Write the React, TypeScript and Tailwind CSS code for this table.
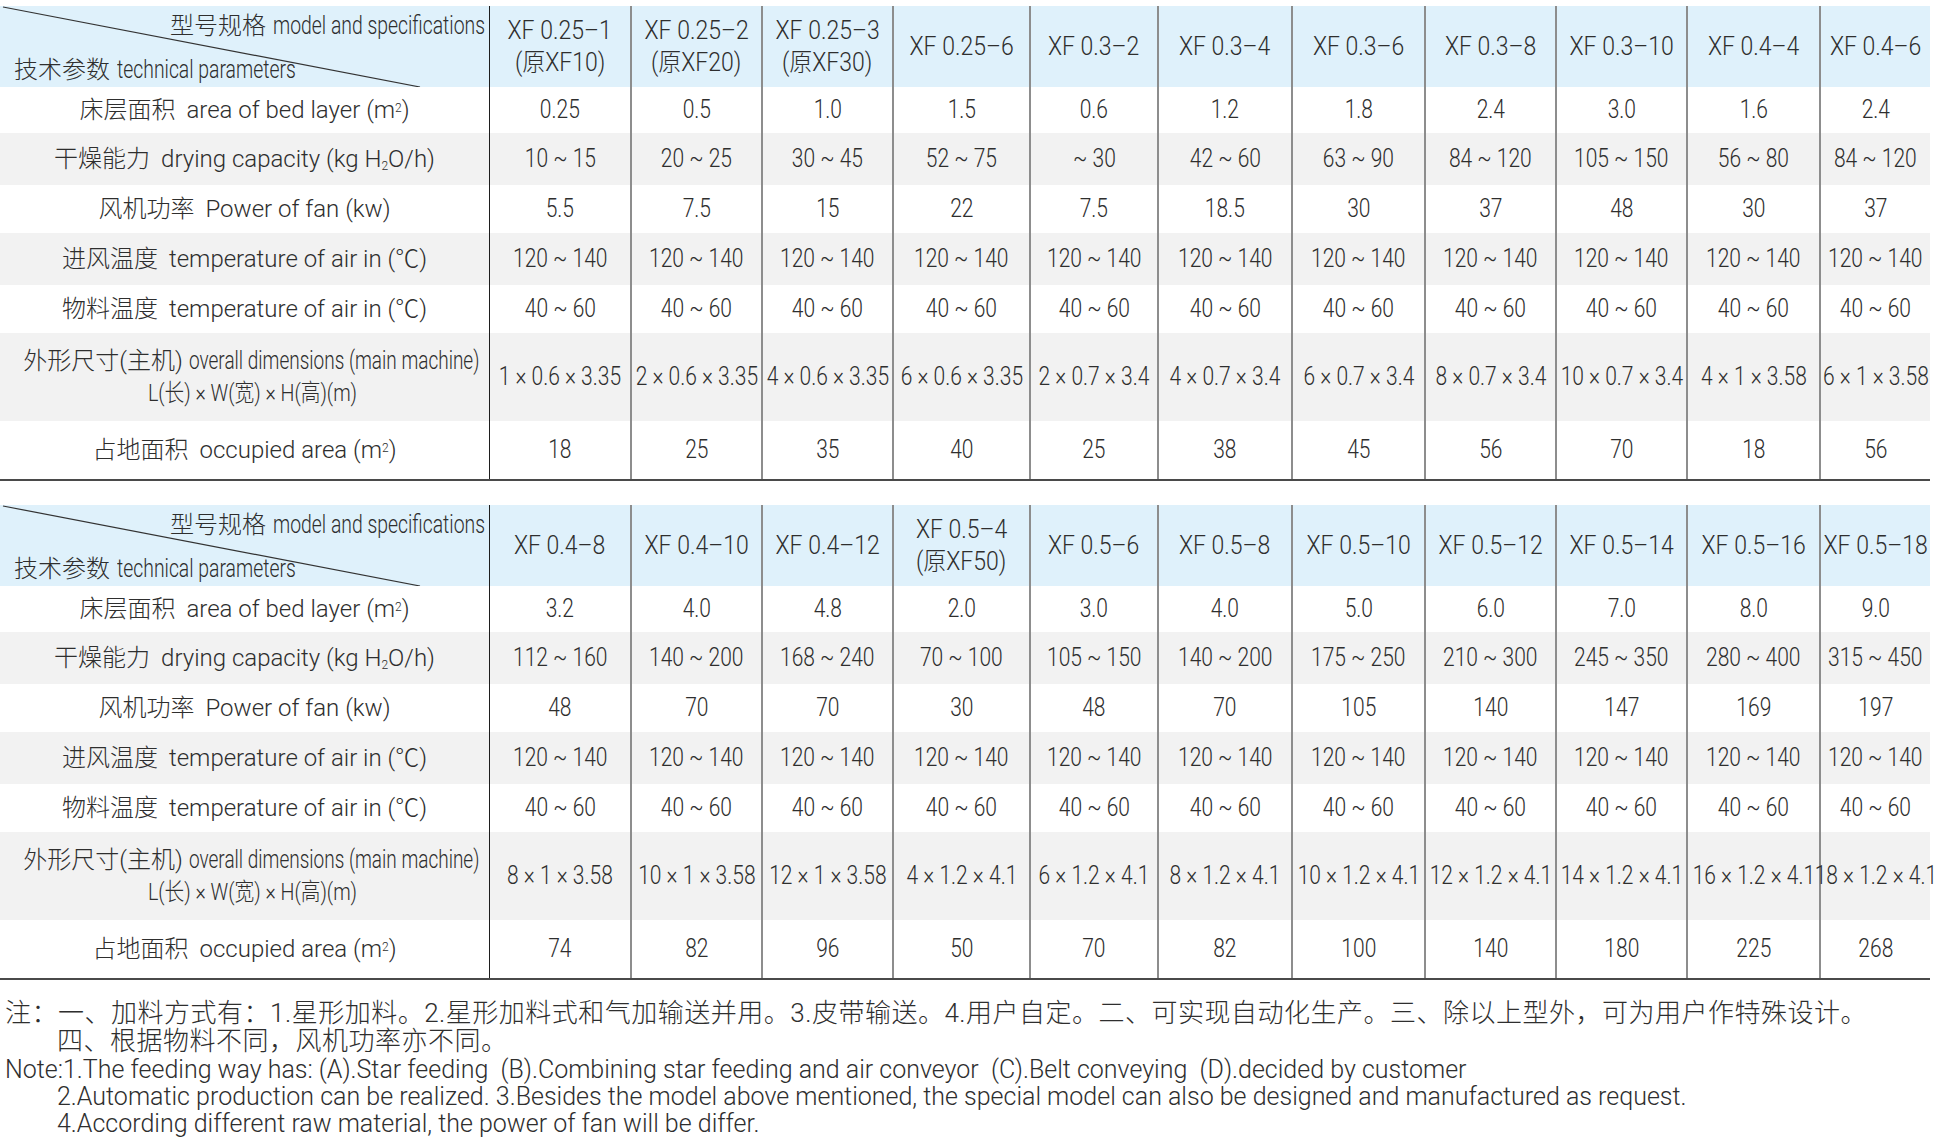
import type { ReactNode } from 'react'

const COLS =
  'grid grid-cols-[489px_141px_131px_131px_137px_128px_134px_133px_131px_131px_133px_111px]'

const ROW_H = ['h-[46px]', 'h-[52px]', 'h-[48px]', 'h-[52px]', 'h-[48px]', 'h-[88px]', 'h-[58px]']
const ROW_BG = ['bg-white', 'bg-[#f2f2f2]', 'bg-white', 'bg-[#f2f2f2]', 'bg-white', 'bg-[#f2f2f2]', 'bg-white']

function Label({ zh, children }: { zh: string; children: ReactNode }) {
  return (
    <div className="flex items-baseline whitespace-nowrap">
      <span className="mr-[11px]">{zh}</span>
      <span>{children}</span>
    </div>
  )
}

const LABELS: ReactNode[] = [
  <Label zh="床层面积">
    area of bed layer (m<sup className="text-[12px]">2</sup>)
  </Label>,
  <Label zh="干燥能力">
    drying capacity (kg H<sub className="text-[12px]">2</sub>O/h)
  </Label>,
  <Label zh="风机功率">Power of fan (kw)</Label>,
  <Label zh="进风温度">temperature of air in (℃)</Label>,
  <Label zh="物料温度">temperature of air in (℃)</Label>,
  <div className="flex flex-col items-center pl-[16px] leading-[32px]">
    <div className="flex items-baseline whitespace-nowrap">
      <span className="mr-[6px]">外形尺寸(主机)</span>
      <span className="inline-block w-[293px] origin-left scale-x-[0.76] text-[25px]">
        overall dimensions (main machine)
      </span>
    </div>
    <span className="inline-block scale-x-[0.82] whitespace-nowrap">L(长) × W(宽) × H(高)(m)</span>
  </div>,
  <Label zh="占地面积">
    occupied area (m<sup className="text-[12px]">2</sup>)
  </Label>,
]

type Spec = {
  models: string[][]
  rows: string[][]
}

const TABLES: Spec[] = [
  {
    models: [
      ['XF 0.25–1', '(原XF10)'],
      ['XF 0.25–2', '(原XF20)'],
      ['XF 0.25–3', '(原XF30)'],
      ['XF 0.25–6'],
      ['XF 0.3–2'],
      ['XF 0.3–4'],
      ['XF 0.3–6'],
      ['XF 0.3–8'],
      ['XF 0.3–10'],
      ['XF 0.4–4'],
      ['XF 0.4–6'],
    ],
    rows: [
      ['0.25', '0.5', '1.0', '1.5', '0.6', '1.2', '1.8', '2.4', '3.0', '1.6', '2.4'],
      ['10 ~ 15', '20 ~ 25', '30 ~ 45', '52 ~ 75', '~ 30', '42 ~ 60', '63 ~ 90', '84 ~ 120', '105 ~ 150', '56 ~ 80', '84 ~ 120'],
      ['5.5', '7.5', '15', '22', '7.5', '18.5', '30', '37', '48', '30', '37'],
      Array(11).fill('120 ~ 140'),
      Array(11).fill('40 ~ 60'),
      [
        '1 × 0.6 × 3.35',
        '2 × 0.6 × 3.35',
        '4 × 0.6 × 3.35',
        '6 × 0.6 × 3.35',
        '2 × 0.7 × 3.4',
        '4 × 0.7 × 3.4',
        '6 × 0.7 × 3.4',
        '8 × 0.7 × 3.4',
        '10 × 0.7 × 3.4',
        '4 × 1 × 3.58',
        '6 × 1 × 3.58',
      ],
      ['18', '25', '35', '40', '25', '38', '45', '56', '70', '18', '56'],
    ],
  },
  {
    models: [
      ['XF 0.4–8'],
      ['XF 0.4–10'],
      ['XF 0.4–12'],
      ['XF 0.5–4', '(原XF50)'],
      ['XF 0.5–6'],
      ['XF 0.5–8'],
      ['XF 0.5–10'],
      ['XF 0.5–12'],
      ['XF 0.5–14'],
      ['XF 0.5–16'],
      ['XF 0.5–18'],
    ],
    rows: [
      ['3.2', '4.0', '4.8', '2.0', '3.0', '4.0', '5.0', '6.0', '7.0', '8.0', '9.0'],
      ['112 ~ 160', '140 ~ 200', '168 ~ 240', '70 ~ 100', '105 ~ 150', '140 ~ 200', '175 ~ 250', '210 ~ 300', '245 ~ 350', '280 ~ 400', '315 ~ 450'],
      ['48', '70', '70', '30', '48', '70', '105', '140', '147', '169', '197'],
      Array(11).fill('120 ~ 140'),
      Array(11).fill('40 ~ 60'),
      [
        '8 × 1 × 3.58',
        '10 × 1 × 3.58',
        '12 × 1 × 3.58',
        '4 × 1.2 × 4.1',
        '6 × 1.2 × 4.1',
        '8 × 1.2 × 4.1',
        '10 × 1.2 × 4.1',
        '12 × 1.2 × 4.1',
        '14 × 1.2 × 4.1',
        '16 × 1.2 × 4.1',
        '18 × 1.2 × 4.1',
      ],
      ['74', '82', '96', '50', '70', '82', '100', '140', '180', '225', '268'],
    ],
  },
]

function cellBorder(i: number) {
  return i === 0 ? 'border-l border-[#1e1e1e]' : 'border-l-2 border-[#8d8d8d]'
}

function DiagonalHeader() {
  return (
    <div className="relative flex h-full flex-col justify-between pb-[2px] pt-[4px] leading-[30px]">
      <svg className="absolute inset-0 h-full w-full" viewBox="0 0 489 81" preserveAspectRatio="none">
        <line x1="3" y1="1" x2="420" y2="81" stroke="#333" strokeWidth="1.2" />
      </svg>
      <div className="flex items-baseline justify-end whitespace-nowrap pr-[4px]">
        <span className="mr-[7px]">型号规格</span>
        <span className="inline-block w-[212px] origin-left scale-x-[0.745] text-[26px]">model and specifications</span>
      </div>
      <div className="flex items-baseline whitespace-nowrap pl-[14px]">
        <span className="mr-[7px]">技术参数</span>
        <span className="inline-block origin-left scale-x-[0.745] text-[26px]">technical parameters</span>
      </div>
    </div>
  )
}

function SpecTable({ spec }: { spec: Spec }) {
  return (
    <div className="border-b-2 border-[#4a4a4a]">
      <div className={`${COLS} h-[81px] bg-[#dff1fb]`}>
        <DiagonalHeader />
        {spec.models.map((m, i) => (
          <div
            key={i}
            className={`flex flex-col items-center justify-center text-[25px] leading-[32px] ${cellBorder(i)}`}
          >
            {m.map((line) => (
              <span key={line} className="inline-block scale-x-[0.92] whitespace-nowrap">
                {line}
              </span>
            ))}
          </div>
        ))}
      </div>
      {spec.rows.map((row, r) => (
        <div key={r} className={`${COLS} ${ROW_H[r]} ${ROW_BG[r]}`}>
          <div className="flex items-center justify-center">{LABELS[r]}</div>
          {row.map((v, i) => (
            <div key={i} className={`flex items-center justify-center text-[25px] ${cellBorder(i)}`}>
              <span className="inline-block scale-x-[0.84] whitespace-nowrap">{v}</span>
            </div>
          ))}
        </div>
      ))}
    </div>
  )
}

export default function App() {
  return (
    <div className="min-h-screen w-[1936px] bg-white pt-[6px] font-['Roboto','Noto_Sans_CJK_SC',sans-serif] text-[24px] font-light text-[#2e2e2e]">
      <div className="w-[1930px]">
        <SpecTable spec={TABLES[0]} />
        <div className="h-[24px]" />
        <SpecTable spec={TABLES[1]} />
      </div>

      <div className="mt-[19px] pl-[5px]">
        <div className="whitespace-nowrap text-[26px] leading-[28px] tracking-[0.5px]">
          注：一、加料方式有：1.星形加料。2.星形加料式和气加输送并用。3.皮带输送。4.用户自定。二、可实现自动化生产。三、除以上型外，可为用户作特殊设计。
        </div>
        <div className="pl-[52px] text-[26px] leading-[28px] tracking-[0.5px]">四、根据物料不同，风机功率亦不同。</div>
        <div className="mt-[1px] text-[25px] leading-[27px]">
          <div className="whitespace-pre">
            Note:1.The feeding way has: (A).Star feeding  (B).Combining star feeding and air conveyor  (C).Belt conveying  (D).decided by customer
          </div>
          <div className="whitespace-nowrap pl-[52px]">
            2.Automatic production can be realized. 3.Besides the model above mentioned, the special model can also be designed and manufactured as request.
          </div>
          <div className="whitespace-nowrap pl-[52px]">
            4.According different raw material, the power of fan will be differ.
          </div>
        </div>
      </div>
    </div>
  )
}
